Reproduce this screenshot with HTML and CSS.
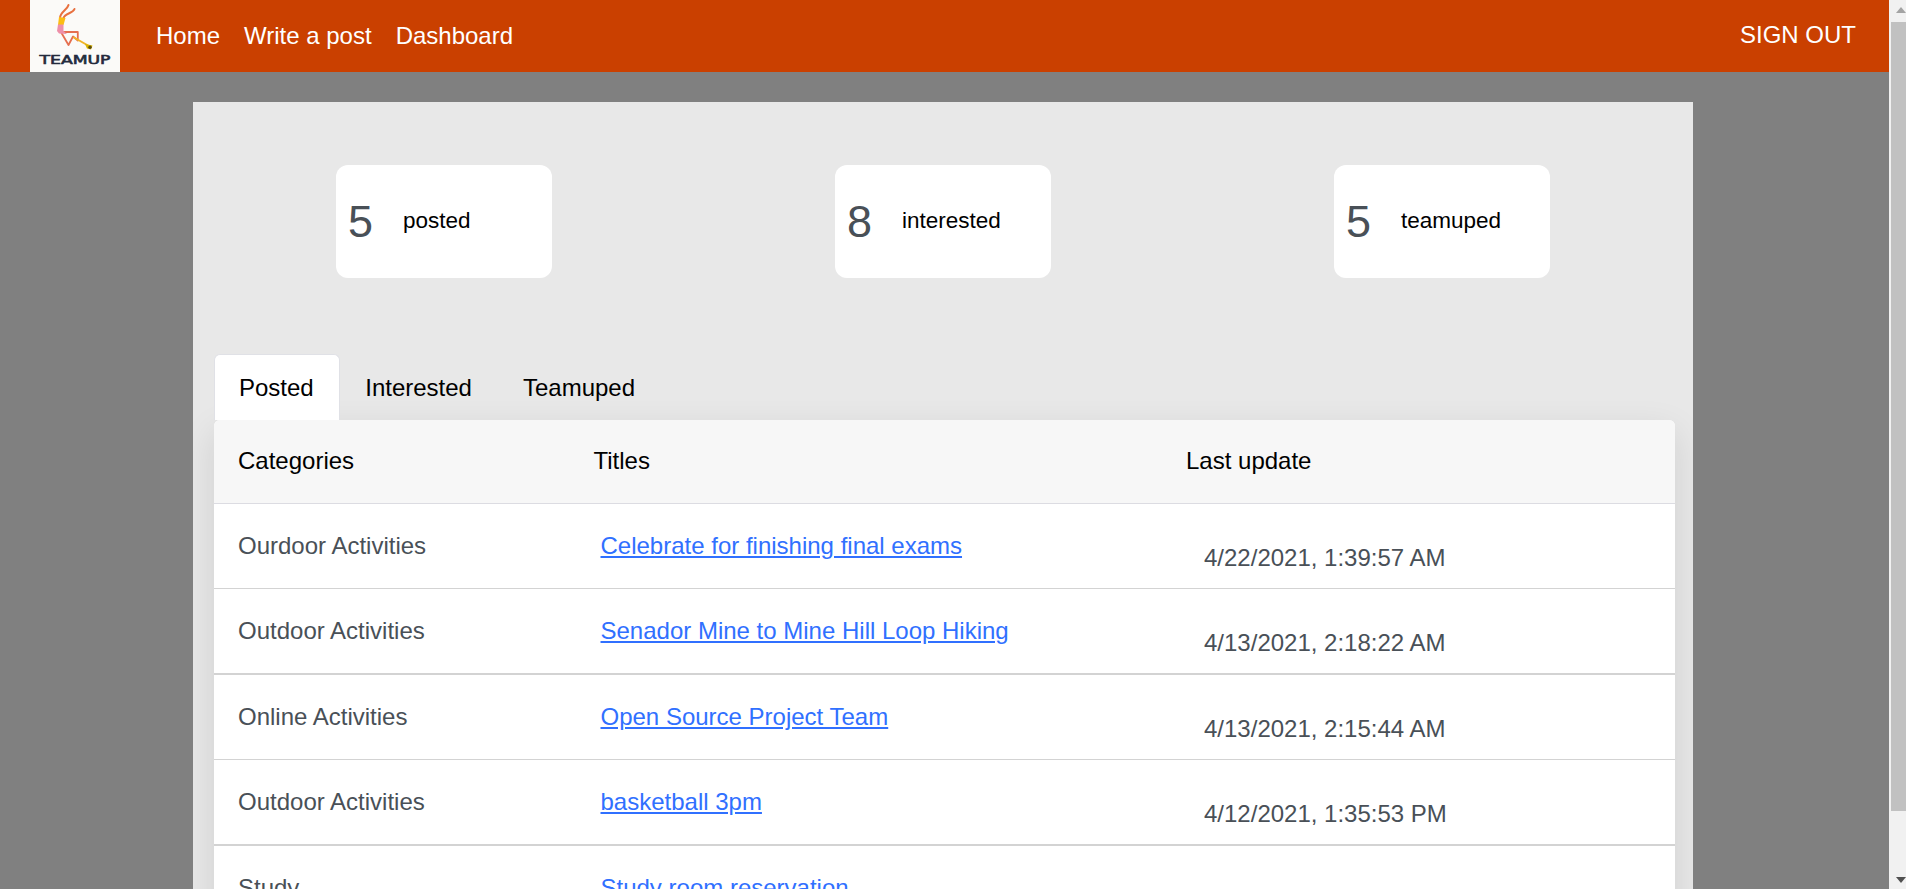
FILE: index.html
```html
<!DOCTYPE html>
<html lang="en">
<head>
<meta charset="utf-8">
<title>TeamUp Dashboard</title>
<link rel="stylesheet" href="styles.css">
</head>
<body>
<div class="page">
  <header class="navbar">
    <svg class="logo" viewBox="0 0 90 72" width="90" height="72" role="img" aria-label="TeamUp">
      <rect width="90" height="72" fill="#fbfaf8"/>
      <g fill="none" stroke-linecap="round" stroke-linejoin="round">
        <path d="M38.500 5C37.500 9.500 30 12 30 18" stroke="#e8703f" stroke-width="2"/>
        <path d="M44.500 9C43 13.500 35 13 33.500 18" stroke="#e8703f" stroke-width="2"/>
        <path d="M33 32H47.800V40.500L43 36.500L38.500 45L31.500 33" stroke="#e56f50" stroke-width="1.800"/>
        <path d="M44 37.500L58 45.500" stroke="#f0b428" stroke-width="2"/>
      </g>
      <path d="M29 17L35.500 18L33.500 25H28Z" fill="#fbbc12"/>
      <path d="M28 24.500H33.500V31L37 34L29 33.500L27 31Z" fill="#ee8fa9"/>
      <path d="M55 44L62.500 45.500L61 49.500L57 48.500Z" fill="#d9b400"/>
      <circle cx="60" cy="47.200" r="1.700" fill="#5c4d10"/>
      <text class="logo-text" x="9.500" y="64" textLength="71" lengthAdjust="spacingAndGlyphs">TEAMUP</text>
    </svg>
    <nav class="links"><a>Home</a><a>Write a post</a><a>Dashboard</a></nav>
    <a class="signout">SIGN OUT</a>
  </header>
  <main class="panel">
    <section class="stats">
      <div class="stat"><span class="count">5</span><span class="label">posted</span></div>
      <div class="stat"><span class="count">8</span><span class="label">interested</span></div>
      <div class="stat"><span class="count">5</span><span class="label">teamuped</span></div>
    </section>
    <div class="tabs"><div class="tab active">Posted</div><div class="tab">Interested</div><div class="tab">Teamuped</div></div>
    <section class="table">
      <div class="row head"><span>Categories</span><span>Titles</span><span>Last update</span></div>
      <div class="row"><span>Ourdoor Activities</span><a class="title">Celebrate for finishing final exams</a><span class="date">4/22/2021, 1:39:57 AM</span></div>
      <div class="row thick"><span>Outdoor Activities</span><a class="title">Senador Mine to Mine Hill Loop Hiking</a><span class="date">4/13/2021, 2:18:22 AM</span></div>
      <div class="row"><span>Online Activities</span><a class="title">Open Source Project Team</a><span class="date">4/13/2021, 2:15:44 AM</span></div>
      <div class="row thick"><span>Outdoor Activities</span><a class="title">basketball 3pm</a><span class="date">4/12/2021, 1:35:53 PM</span></div>
      <div class="row"><span>Study</span><a class="title">Study room reservation</a><span class="date"></span></div>
    </section>
  </main>
</div>
<div class="scrollbar"><i class="arrow up"></i><div class="thumb"></div><i class="arrow down"></i></div>
</body>
</html>
```

FILE: styles.css
```css
* { box-sizing: border-box; }
body {
  margin: 0;
  height: 889px;
  overflow: hidden;
  display: flex;
  background: #808080;
  font: 24px/36px "Liberation Sans", Arial, sans-serif;
  color: #495057;
}
.page { flex: 1; height: 889px; overflow: hidden; }
.navbar {
  display: flex;
  align-items: center;
  height: 72px;
  padding: 0 33px 0 30px;
  background: #ca4000;
  color: #fff;
}
.logo { display: block; }
.logo-text {
  font: 12px "DejaVu Sans", sans-serif;
  fill: #232a3c;
  stroke: #232a3c;
  stroke-width: 0.6px;
}
.links { display: flex; gap: 24px; margin-left: 36px; }
.signout { margin-left: auto; padding-bottom: 2px; }
.panel {
  width: 1500px;
  height: 1000px;
  margin: 30px 0 0 193px;
  padding-top: 63px;
  background: #e8e8e8;
  overflow: hidden;
}
.stats { display: flex; justify-content: space-around; padding: 0 1.5px; }
.stat {
  display: flex;
  align-items: center;
  width: 216px;
  height: 113px;
  padding-left: 12px;
  border-radius: 12px;
  background: #fff;
}
.count { width: 55px; font-size: 45px; }
.label { padding-bottom: 1px; font-size: 22.5px; color: #000; }
.tabs { display: flex; margin: 76px 0 0 21px; color: #000; }
.tab { height: 66px; padding: 16px 25.5px 14px; }
.tab.active {
  padding: 15px 25px 14px 24px;
  border: 1px solid #e0e1e6;
  border-width: 1px 1px 0 1px;
  border-radius: 6px 6px 0 0;
  background: #fff;
}
.table {
  width: 1461px;
  margin-left: 21px;
  border-radius: 6px;
  background: #fff;
  box-shadow: 0 12px 36px rgba(0, 0, 0, 0.11);
}
.row {
  display: grid;
  grid-template-columns: 355.5px 592.5px 1fr;
  align-items: center;
  height: 85px;
  padding-left: 24px;
  border-bottom: 1px solid #d3d3d3;
}
.thick { height: 86px; border-bottom-width: 2px; }
.head {
  height: 84px;
  padding-bottom: 1px;
  border-bottom: 1px solid #dcdce2;
  border-radius: 6px 6px 0 0;
  background: #f7f7f7;
  color: #000;
}
.title { padding-left: 7px; color: #3070ff; text-decoration: underline; }
.date { padding: 24px 0 0 18px; }
.scrollbar {
  display: flex;
  flex-direction: column;
  align-items: center;
  width: 17px;
  height: 889px;
  background: #f1f1f1;
}
.arrow { width: 0; height: 0; border: 5px solid transparent; }
.up { margin: 2px 0 9px 7px; border-bottom: 6px solid #a3a3a3; }
.thumb { width: 15px; height: 789px; margin-left: 2px; background: #c1c1c1; }
.down { margin: 66px 0 0 7px; border-top: 6px solid #505050; }
```
